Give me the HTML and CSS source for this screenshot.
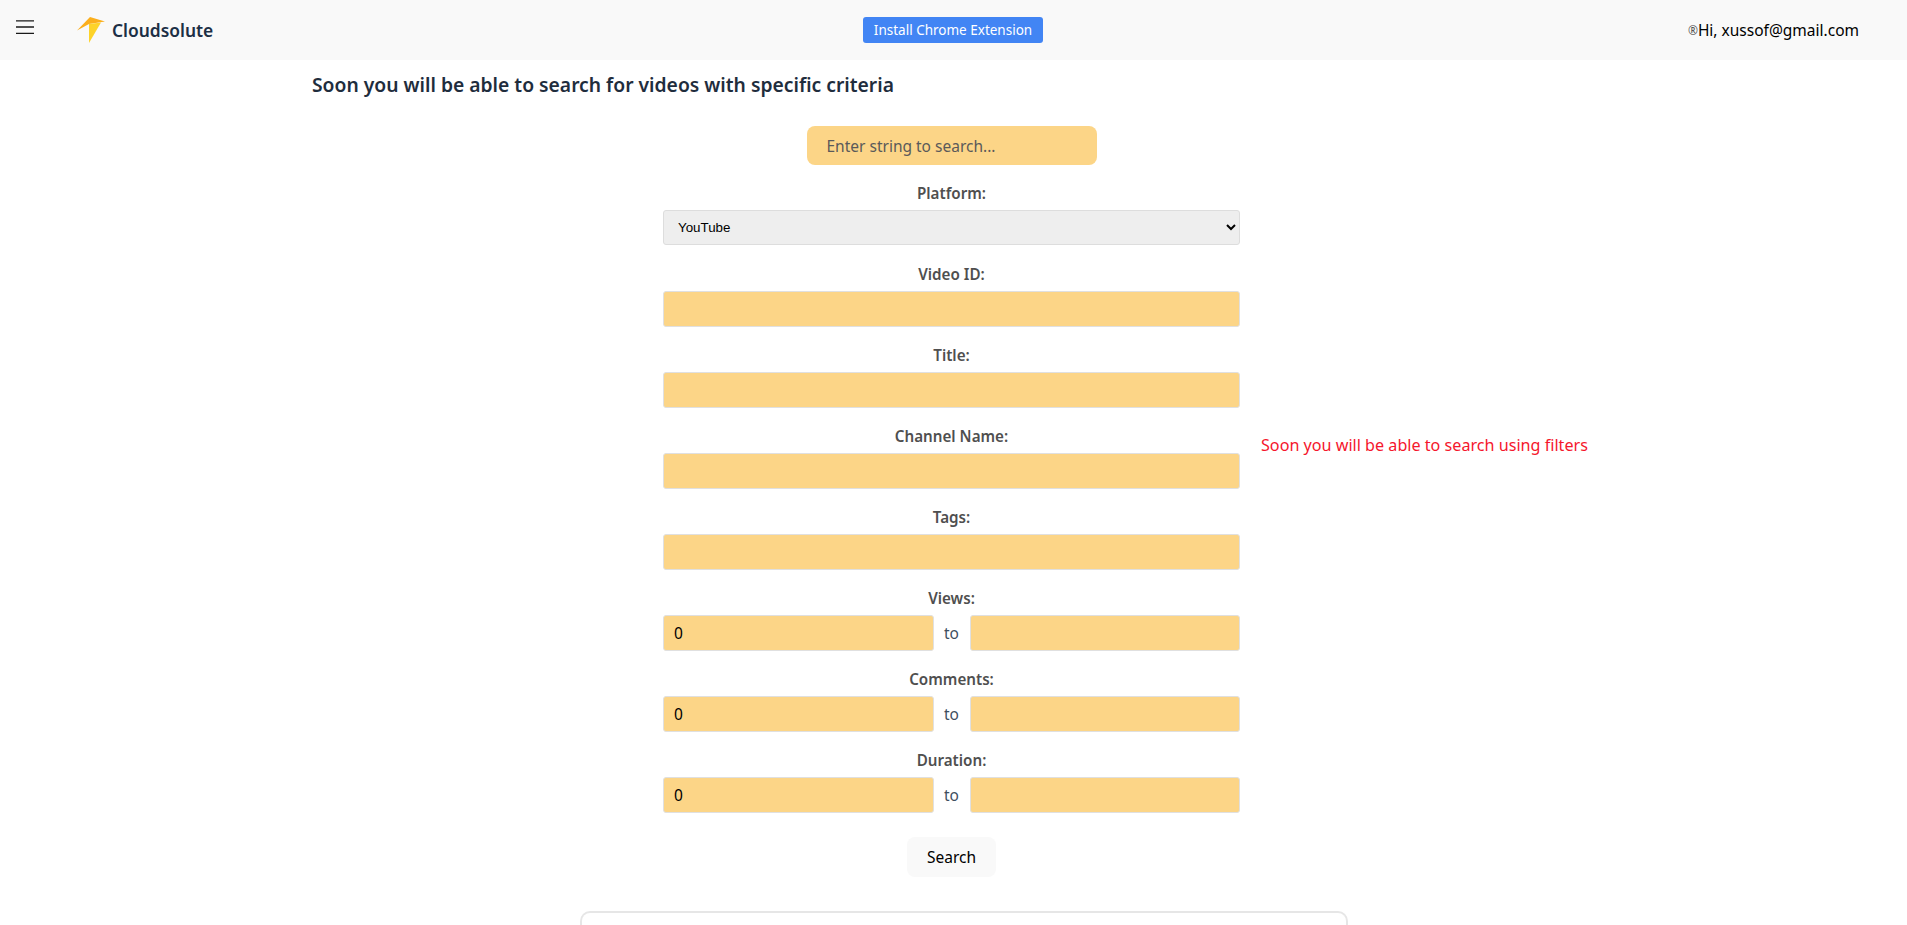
FILE: index.html
```html
<!DOCTYPE html>
<html lang="en">
<head>
<meta charset="utf-8">
<title>Cloudsolute</title>
<link rel="stylesheet" href="styles.css">
</head>
<body>
<header class="topbar">
  <div class="brand-group">
    <button class="menu-btn" aria-label="Menu">
      <svg width="18" height="14" viewBox="0 0 18 14"><path d="M0 .8h18M0 7h18M0 13.300h18" stroke="#1a1a1a" stroke-width="1.3" fill="none"/></svg>
    </button>
    <a class="brand">
      <svg class="brand-logo" width="28" height="26" viewBox="0 0 28 26"><path d="M0 13.500 L13 0 L28 4.500 L12 7 Z" fill="#fbaf1d"/><path d="M12 7 L24 5.500 L12 26 Z" fill="#fdd32a"/></svg>
      <span>Cloudsolute</span>
    </a>
  </div>
  <button class="install-btn">Install Chrome Extension</button>
  <div class="user"><span class="user-icon">®</span>Hi, xussof@gmail.com</div>
</header>
<main class="page">
  <h1 class="title">Soon you will be able to search for videos with specific criteria</h1>
  <input class="search-input" placeholder="Enter string to search...">
  <div class="filters-wrap">
    <form class="filters">
      <label class="field-label">Platform:</label>
      <select class="field-select"><option>YouTube</option></select>
      <label class="field-label">Video ID:</label>
      <input class="field-input">
      <label class="field-label">Title:</label>
      <input class="field-input">
      <label class="field-label">Channel Name:</label>
      <input class="field-input">
      <label class="field-label">Tags:</label>
      <input class="field-input">
      <label class="field-label">Views:</label>
      <div class="range"><input class="field-input" value="0"><span class="range-to">to</span><input class="field-input"></div>
      <label class="field-label">Comments:</label>
      <div class="range"><input class="field-input" value="0"><span class="range-to">to</span><input class="field-input"></div>
      <label class="field-label">Duration:</label>
      <div class="range"><input class="field-input" value="0"><span class="range-to">to</span><input class="field-input"></div>
    </form>
    <p class="notice">Soon you will be able to search using filters</p>
  </div>
  <button class="search-btn">Search</button>
  <section class="results-card"></section>
</main>
</body>
</html>
```
FILE: styles.css
```css
* { box-sizing: border-box; }
html, body { margin: 0; height: 925px; overflow: hidden; }
body { font-family: "Noto Sans", sans-serif; background: #fff; color: #1f2d3d; }
.topbar { height: 60px; background: #f9f9f9; display: flex; align-items: center; justify-content: space-between; padding: 0 48px 0 16px; position: relative; }
.brand-group { display: flex; align-items: center; gap: 43px; }
.menu-btn { border: 0; background: none; padding: 0; display: flex; margin-bottom: 7px; }
.brand { display: flex; align-items: center; gap: 7px; font-size: 17.400px; font-weight: 600; color: #1c2f45; }
.install-btn { position: absolute; left: 863px; top: 17px; height: 26px; width: 180px; border: 0; border-radius: 3px; background: #4285f4; color: #fff; font: 13.500px "Noto Sans", sans-serif; padding: 0; }
.user { font-size: 15.500px; color: #000; display: flex; align-items: center; }
.user-icon { font-size: 12px; color: #555; }
.page { display: flex; flex-direction: column; align-items: center; padding-right: 4px; }
.title { align-self: flex-start; margin: 11px 0 0 312px; font-size: 19.300px; font-weight: 600; line-height: 28px; color: #1f2d3d; }
.search-input { margin-top: 27px; width: 290px; height: 39px; border: 0; border-radius: 8px; background: #fcd587; padding: 0 20px; font: 15.500px "Noto Sans", sans-serif; }
.search-input::placeholder { color: #5a5a5a; opacity: 1; }
.filters-wrap { position: relative; width: 577px; margin-top: 17px; }
.filters { display: flex; flex-direction: column; align-items: center; }
.field-label { font-size: 15.200px; font-weight: 600; color: #4f4f4f; line-height: 22px; height: 22px; margin-bottom: 6px; }
.field-label:not(:first-child) { margin-top: 18px; }
.field-select { width: 100%; height: 35px; background: #eee; border: 1px solid #ddd; border-radius: 3px; font: 13.330px "Liberation Sans", sans-serif; padding: 0 10px; color: #000; }
.field-select + .field-label { margin-top: 18px; }
.field-input { width: 100%; height: 36px; background: #fcd587; border: 1px solid #e0e0e0; border-radius: 3px; padding: 0 10px; font: 15.500px "Noto Sans", sans-serif; color: #000; min-width: 0; }
.field-input + .field-label, .range + .field-label { margin-top: 17px; }
.range { width: 100%; display: flex; align-items: center; }
.range-to { width: 36px; flex: none; text-align: center; font-size: 15.500px; color: #3f4f5f; }
.notice { position: absolute; left: 598px; top: 251px; margin: 0; color: #f5162c; font-size: 16.150px; white-space: nowrap; line-height: 24px; }
.search-btn { margin-top: 24px; width: 89px; height: 40px; border: 0; border-radius: 8px; background: #f9f9f9; color: #000; font: 15.500px "Noto Sans", sans-serif; }
.results-card { margin: 34px 0 0 25px; width: 768px; height: 15px; border: 2px solid #e6e6e6; border-bottom: 0; border-radius: 10px 10px 0 0; background: #fff; flex: none; }
```
